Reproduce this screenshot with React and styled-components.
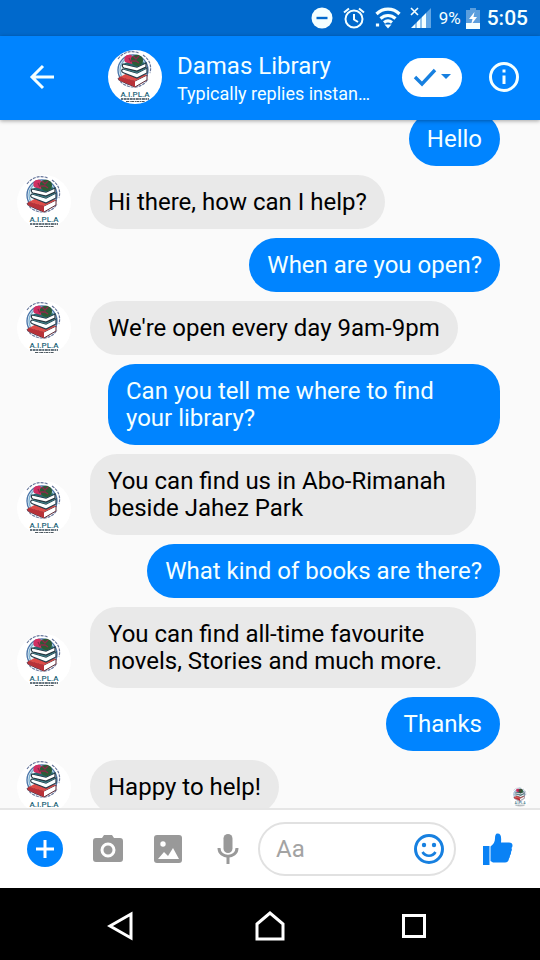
import React, { useLayoutEffect, useRef } from "react";
import styled, { createGlobalStyle, css } from "styled-components";

const GlobalStyle = createGlobalStyle`
  * { box-sizing: border-box; }
  body { margin: 0; background: #fafafa; font-family: Roboto, "Noto Sans", sans-serif; }
  button, input { font: inherit; }
`;

const Screen = styled.div`
  display: flex;
  flex-direction: column;
  height: 100vh;
`;

const StatusBar = styled.div`
  display: flex;
  align-items: center;
  justify-content: flex-end;
  flex: none;
  height: 36px;
  padding-right: 12px;
  background: #0069cc;
  color: #f4ffff;
`;

const StatusIcon = styled.svg`
  display: block;
  flex: none;
  margin-right: ${(p) => p.$gap}px;
`;

const Battery = styled.span`
  margin-right: 5px;
  font-size: 17px;
  line-height: 20px;
`;

const Clock = styled.time`
  font-size: 21px;
  font-weight: 500;
  line-height: 24px;
`;

const Header = styled.header`
  position: relative;
  z-index: 1;
  display: flex;
  align-items: center;
  flex: none;
  height: 84px;
  padding: 0 21px 2px 24px;
  background: #0084ff;
  color: #f4ffff;
  box-shadow: 0 1px 4px rgba(0, 0, 0, 0.35);
`;

const IconButton = styled.button`
  display: flex;
  align-items: center;
  justify-content: center;
  flex: none;
  width: ${(p) => p.$width}px;
  height: 48px;
  padding: 0;
  border: 0;
  background: none;
  color: ${(p) => p.$color};
`;

const HeaderAvatar = styled.div`
  flex: none;
  margin: 0 15px 0 48px;
`;

const Contact = styled.div`
  flex: 1;
  min-width: 0;
  padding-top: 3px;
`;

const Name = styled.h1`
  margin: 0;
  font-size: 24px;
  font-weight: 400;
  line-height: 30px;
`;

const Reply = styled.p`
  margin: 0;
  overflow: hidden;
  font-size: 18px;
  line-height: 26px;
  text-overflow: ellipsis;
  white-space: nowrap;
`;

const StatusPill = styled.button`
  display: flex;
  align-items: center;
  justify-content: center;
  flex: none;
  width: 60px;
  height: 39px;
  margin: 0 27px 0 30px;
  padding: 0;
  border: 0;
  border-radius: 20px;
  background: #fff;
  color: #1780e0;
`;

const Conversation = styled.main`
  flex: 1;
  min-height: 0;
  overflow-y: auto;
  scrollbar-width: none;
`;

const Messages = styled.ol`
  display: flex;
  flex-direction: column;
  gap: 9px;
  margin: 0;
  padding: 0 0 9px;
  list-style: none;
`;

const Message = styled.li`
  display: grid;
  grid-template-columns: 90px 1fr 40px;
  align-items: end;
`;

const AvatarSlot = styled.div`
  padding-left: 17px;
`;

const SeenSlot = styled.div`
  display: flex;
  justify-content: center;
  align-self: center;
  padding-top: 20px;
`;

const Bubble = styled.p`
  margin: 0;
  padding: 14px 18px 13px;
  border-radius: 27px;
  font-size: 24px;
  line-height: 27px;
  ${(p) =>
    p.$sent
      ? css`
          justify-self: end;
          margin-left: 18px;
          background: #0084ff;
          color: #f4ffff;
        `
      : css`
          justify-self: start;
          margin-right: 24px;
          background: #e9e9e9;
          color: #000;
        `}
`;

const Disc = styled.svg`
  display: block;
  border-radius: 50%;
  background: #fff;
`;

const Composer = styled.form`
  display: flex;
  align-items: center;
  flex: none;
  height: 80px;
  padding-left: 12px;
  border-top: 2px solid #e6e6e6;
  background: #fff;
`;

const Field = styled.div`
  display: flex;
  align-items: center;
  flex: 1;
  min-width: 0;
  height: 54px;
  border: 2px solid #e1e1e1;
  border-radius: 27px;
`;

const TextInput = styled.input`
  flex: 1;
  min-width: 0;
  width: 0;
  padding: 0 0 0 16px;
  border: 0;
  outline: 0;
  background: none;
  font-size: 24px;
  color: #000;
  &::placeholder { color: #a3a3a3; opacity: 1; }
`;

const NavBar = styled.nav`
  display: flex;
  align-items: center;
  justify-content: space-between;
  flex: none;
  height: 72px;
  padding: 4px 114px 0 102px;
  background: #000;
`;

function Avatar({ size }) {
  return (
    <Disc width={size} height={size} viewBox="0 0 54 54" role="img" aria-label="Damas Library">
      <g transform="translate(-1 -1)">
        <path d="M11 10C16 3 24 1 32 4M36 6c6 4 9 10 7 18M11 29c3 6 9 9 16 9 6 0 11-3 14-8" fill="none" stroke="#66759a" strokeWidth="1.2" strokeDasharray="3 1" />
        <circle cx="26" cy="21" r="15" fill="none" stroke="#4d78ab" strokeWidth="1.4" />
        <circle cx="26" cy="21" r="13" fill="#eaf7fa" stroke="#7fb2d2" strokeWidth="1.4" />
        <path d="M13 28l15 4 12-6v5l-12 7-14-6c-3-1-3-3-1-4z" fill="#fff" stroke="#5b2934" strokeWidth="1" />
        <path d="M13 28l15 4v6l-14-6c-3-1-3-3-1-4z" fill="#b83239" />
        <path d="M13 28l11-6 16 4-12 6z" fill="#dd4c48" />
        <path d="M16 20l14 4 10-5v5l-10 5-13-5c-3-1-3-3-1-4z" fill="#f9ffff" stroke="#263a49" strokeWidth="1.2" />
        <path d="M16 20l9-4 15 3-10 5z" fill="#3c858b" />
        <path d="M16 15l14 3 9-4v4l-9 4-13-3c-2-1-2-3-1-4z" fill="#fff" stroke="#26333d" strokeWidth="1.2" />
        <path d="M16 15l9-4 14 3-9 4z" fill="#28666f" />
        <path d="M18 13c-2-5 1-8 6-7l4 4-3 5z" fill="#d12f62" />
        <path d="M24 9c4-6 12-3 12 2 0 4-3 6-6 6-4 0-6-4-6-8z" fill="#2c5b35" />
        <path d="M26 7l3 3 3-3M25 12h4l3 2M22 9l2 4" fill="none" stroke="#8e2949" strokeWidth="1.4" />
      </g>
      <text x="27" y="47" textAnchor="middle" fontFamily="Roboto, sans-serif" fontSize="8" fontWeight="500" fill="#1c6478">A.I.PL.A</text>
      <path d="M13 49h28" stroke="#334653" strokeWidth="1.4" strokeDasharray="2 .6 3 .5" />
      <path d="M18 51.500h19" stroke="#4b565d" strokeWidth="1.2" strokeDasharray="3 .7 1 .5" />
    </Disc>
  );
}

const messages = [
  { sent: true, text: "Hello" },
  { text: "Hi there, how can I help?" },
  { sent: true, text: "When are you open?" },
  { text: "We're open every day 9am-9pm" },
  { sent: true, text: "Can you tell me where to find your library?" },
  { text: "You can find us in Abo-Rimanah beside Jahez Park" },
  { sent: true, text: "What kind of books are there?" },
  { text: "You can find all-time favourite novels, Stories and much more." },
  { sent: true, text: "Thanks" },
  { text: "Happy to help!", seen: true },
];

function StatusIcons() {
  return (
    <>
      <StatusIcon $gap={10} width="22" height="22" viewBox="0 0 22 22">
        <circle cx="11" cy="11" r="10.5" fill="currentColor" />
        <path d="M5.5 11h11" stroke="#0069cc" strokeWidth="2.4" />
      </StatusIcon>
      <StatusIcon $gap={10} width="22" height="22" viewBox="0 0 22 22" fill="none" stroke="currentColor" strokeWidth="2">
        <circle cx="11" cy="12" r="8.5" />
        <path d="M11 7v5.500l4 2.500M1 5.500l5-4M21 5.500l-5-4" />
      </StatusIcon>
      <StatusIcon $gap={9} width="26" height="22" viewBox="0 0 26 22" fill="none" stroke="currentColor" strokeWidth="3.2">
        <path d="M1.500 7C8 .5 18 .5 24.500 7M5.500 11.500c4.500-4 10.500-4 15 0M9 15.500c2.500-2 5.500-2 8 0" />
        <path d="M9.500 17.500h7L13 21.500z" fill="currentColor" stroke="none" />
        <path d="M2.500 16.500v4" strokeDasharray="3 1" />
      </StatusIcon>
      <StatusIcon $gap={7} width="22" height="22" viewBox="0 0 22 22">
        <path d="M16 6l5-5v20h-5z" fill="#62a6e4" />
        <path d="M1 21L16 6v15z" fill="currentColor" />
        <path d="M6 15v6M11 10v11" stroke="#0069cc" strokeWidth=".8" />
        <path d="M1 1l7 7M8 1L1 8" stroke="currentColor" strokeWidth="1.6" />
      </StatusIcon>
      <Battery>9%</Battery>
      <StatusIcon $gap={7} width="14" height="21" viewBox="0 0 14 21">
        <path d="M4 0h6v2h4v13H0V2h4z" fill="#5b9edd" />
        <path d="M0 15h14v6H0z" fill="currentColor" />
        <path d="M8.500 4L3 11h3.500L5 17l6-8H7.500z" fill="#fff" />
      </StatusIcon>
      <Clock>5:05</Clock>
    </>
  );
}

export default function App() {
  const scroller = useRef(null);

  useLayoutEffect(() => {
    scroller.current.scrollTop = 8;
  }, []);

  return (
    <Screen>
      <GlobalStyle />
      <StatusBar>
        <StatusIcons />
      </StatusBar>
      <Header>
        <IconButton type="button" aria-label="Back" $width={36} $color="#f4ffff">
          <svg width="26" height="26" viewBox="0 0 26 26" fill="none" stroke="currentColor" strokeWidth="3">
            <path d="M25 13H3M14 2L3 13l11 11" />
          </svg>
        </IconButton>
        <HeaderAvatar><Avatar size={54} /></HeaderAvatar>
        <Contact>
          <Name>Damas Library</Name>
          <Reply>Typically replies instantly</Reply>
        </Contact>
        <StatusPill type="button" aria-label="Mark as done">
          <svg width="38" height="20" viewBox="0 0 38 20">
            <path d="M2 10l7 7L22 3" fill="none" stroke="currentColor" strokeWidth="3.4" />
            <path d="M28 7h10l-5 5z" fill="currentColor" />
          </svg>
        </StatusPill>
        <IconButton type="button" aria-label="Information" $width={30} $color="#f4ffff">
          <svg width="30" height="30" viewBox="0 0 30 30" fill="none" stroke="currentColor" strokeWidth="3">
            <circle cx="15" cy="15" r="13.5" />
            <path d="M15 13.500v8.500M15 7.500v3" />
          </svg>
        </IconButton>
      </Header>
      <Conversation ref={scroller}>
        <Messages>
          {messages.map((m) => (
            <Message key={m.text}>
              <AvatarSlot>{!m.sent && <Avatar size={54} />}</AvatarSlot>
              <Bubble $sent={m.sent}>{m.text}</Bubble>
              {m.seen && <SeenSlot><Avatar size={20} /></SeenSlot>}
            </Message>
          ))}
        </Messages>
      </Conversation>
      <Composer onSubmit={(e) => e.preventDefault()}>
        <IconButton type="button" aria-label="More" $width={66} $color="#0084ff">
          <svg width="36" height="36" viewBox="0 0 36 36">
            <circle cx="18" cy="18" r="18" fill="currentColor" />
            <path d="M18 9v18M9 18h18" stroke="#fff" strokeWidth="3" />
          </svg>
        </IconButton>
        <IconButton type="button" aria-label="Camera" $width={60} $color="#999">
          <svg width="30" height="30" viewBox="0 0 30 30">
            <path d="M3 4h6l2-3h8l2 3h6q3 0 3 3v18q0 3-3 3H3q-3 0-3-3V7q0-3 3-3z" fill="currentColor" />
            <circle cx="15" cy="16" r="6" fill="none" stroke="#fff" strokeWidth="3" />
          </svg>
        </IconButton>
        <IconButton type="button" aria-label="Gallery" $width={60} $color="#999">
          <svg width="28" height="28" viewBox="0 0 28 28">
            <rect width="28" height="28" rx="3" fill="currentColor" />
            <circle cx="9" cy="9" r="2.700" fill="#fff" />
            <path d="M4 24l6-7 4 4 5-8 6 11z" fill="#fff" />
          </svg>
        </IconButton>
        <IconButton type="button" aria-label="Voice message" $width={60} $color="#999">
          <svg width="22" height="30" viewBox="0 0 22 30">
            <rect x="6.500" y="0" width="9" height="19" rx="4.500" fill="currentColor" />
            <path d="M2 14c0 11 18 11 18 0M11 22v8" fill="none" stroke="currentColor" strokeWidth="3" />
          </svg>
        </IconButton>
        <Field>
          <TextInput type="text" placeholder="Aa" aria-label="Message" />
          <IconButton type="button" aria-label="Emoji" $width={50} $color="#1780e0">
            <svg width="30" height="30" viewBox="0 0 30 30">
              <circle cx="15" cy="15" r="13.5" fill="none" stroke="currentColor" strokeWidth="3" />
              <circle cx="10" cy="11" r="2.200" fill="currentColor" />
              <circle cx="20" cy="11" r="2.200" fill="currentColor" />
              <path d="M8.500 18c3 5 10 5 13 0" fill="none" stroke="currentColor" strokeWidth="2.600" />
            </svg>
          </IconButton>
        </Field>
        <IconButton type="button" aria-label="Like" $width={84} $color="#0a82f5">
          <svg width="30" height="34" viewBox="0 0 30 34">
            <path d="M0 14h6.500v19H0z" fill="currentColor" />
            <path d="M7.500 14.500c3-2 4.500-5 4.500-8 0-3 .5-5 2.500-5 3.500 0 4 3 3.500 9h8q3.500 0 3.500 3 0 1.500-1 2.500 1 2-.5 4 .3 2-1 3.500 0 2-1 3-.5 4-4 4H10l-2.500-1.500z" fill="currentColor" />
          </svg>
        </IconButton>
      </Composer>
      <NavBar>
        <IconButton type="button" aria-label="System back" $width={36} $color="#fff">
          <svg width="26" height="30" viewBox="0 0 26 30" fill="none" stroke="currentColor" strokeWidth="3">
            <path d="M24 3v24L3 15z" />
          </svg>
        </IconButton>
        <IconButton type="button" aria-label="Home" $width={30} $color="#fff">
          <svg width="30" height="32" viewBox="0 0 30 32" fill="none" stroke="currentColor" strokeWidth="3">
            <path d="M2 14L15 3l13 11v15H2z" />
          </svg>
        </IconButton>
        <IconButton type="button" aria-label="Recent apps" $width={24} $color="#fff">
          <svg width="24" height="24" viewBox="0 0 24 24" fill="none" stroke="currentColor" strokeWidth="3">
            <path d="M1.500 1.500h21v21h-21z" />
          </svg>
        </IconButton>
      </NavBar>
    </Screen>
  );
}
